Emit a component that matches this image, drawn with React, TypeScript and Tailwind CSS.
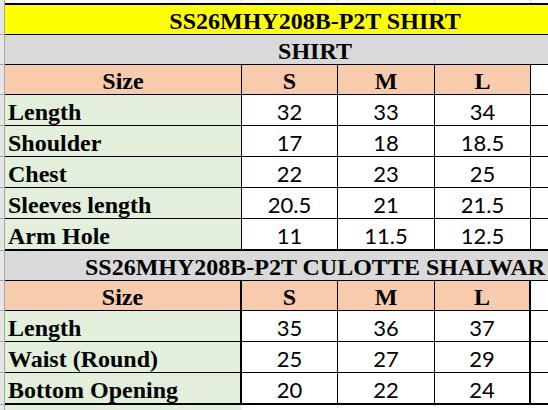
const serif = "font-['Liberation_Serif',serif] font-bold text-[24px] text-black";
const sans = "font-['Lato',sans-serif] text-[22px] text-black";
const cols = 'grid grid-cols-[5px_237px_96px_97px_96px_1fr]';

type Row = { label: string; values: string[] };

const shirt: Row[] = [
  { label: 'Length', values: ['32', '33', '34'] },
  { label: 'Shoulder', values: ['17', '18', '18.5'] },
  { label: 'Chest', values: ['22', '23', '25'] },
  { label: 'Sleeves length', values: ['20.5', '21', '21.5'] },
  { label: 'Arm Hole', values: ['11', '11.5', '12.5'] },
];

const culotte: Row[] = [
  { label: 'Length', values: ['35', '36', '37'] },
  { label: 'Waist (Round)', values: ['25', '27', '29'] },
  { label: 'Bottom Opening', values: ['20', '22', '24'] },
];

function Strip({ bottom = true }: { bottom?: boolean }) {
  return (
    <div
      className={`bg-[#e6e6e6] border-r border-[#a6a6a6] ${bottom ? 'border-b border-b-[#a6a6a6]' : ''}`}
    />
  );
}

function TitleRow({ text, bg, top = false, h }: { text: string; bg: string; top?: boolean; h: string }) {
  return (
    <div className={`${cols} ${h}`}>
      <Strip />
      <div
        className={`col-span-5 overflow-hidden border-b border-black ${bg} ${top ? 'border-t-2' : ''} flex items-center`}
      >
        <div className={`w-[620px] shrink-0 text-center leading-none pt-[2px] ${serif}`}>{text}</div>
      </div>
    </div>
  );
}

function HeaderRow({ thick = false }: { thick?: boolean }) {
  return (
    <div className={`${cols} h-[30px]`}>
      <Strip />
      <div
        className={`bg-[#f8cbad] border-b border-black ${thick ? 'border-r-2' : 'border-r'} border-r-black flex items-center justify-center leading-none pt-[3px] ${serif}`}
      >
        Size
      </div>
      {['S', 'M', 'L'].map((s, i) => (
        <div
          key={s}
          className={`bg-[#f8cbad] border-b border-black ${thick && i === 2 ? 'border-r-2' : 'border-r'} border-r-black flex items-center justify-center leading-none pt-[3px] ${serif}`}
        >
          {s}
        </div>
      ))}
      <div className="bg-white border-b border-black" />
    </div>
  );
}

function DataRow({ row, last = false, thick = false }: { row: Row; last?: boolean; thick?: boolean }) {
  const b = last ? 'border-b-2' : 'border-b';
  return (
    <div className={`${cols} ${last ? 'h-[32px]' : 'h-[31px]'}`}>
      <Strip />
      <div
        className={`bg-[#e2efda] ${b} border-black ${thick ? 'border-r-2' : 'border-r'} border-r-black flex items-center pl-[3px] leading-none pt-[3px] ${serif}`}
      >
        {row.label}
      </div>
      {row.values.map((v, i) => (
        <div
          key={i}
          className={`bg-white ${b} border-black ${thick && i === 2 ? 'border-r-2' : 'border-r'} border-r-black flex items-center justify-center leading-none pt-[3px] ${sans}`}
        >
          {v}
        </div>
      ))}
      <div className={`bg-white ${b} border-black`} />
    </div>
  );
}

export default function App() {
  return (
    <div className="w-[548px] h-[410px] overflow-hidden bg-white">
      <div className={`${cols} h-[3px]`}>
        <div className="bg-[#e6e6e6] border-r border-[#a6a6a6]" />
        <div className="border-r border-[#d4d4d4]" />
        <div className="border-r border-[#d4d4d4]" />
        <div className="border-r border-[#d4d4d4]" />
        <div className="border-r border-[#d4d4d4]" />
        <div />
      </div>

      <TitleRow text="SS26MHY208B-P2T SHIRT" bg="bg-[#ffff00]" top h="h-[32px]" />
      <TitleRow text="SHIRT" bg="bg-[#d9d9d9]" h="h-[30px]" />
      <HeaderRow />
      {shirt.map((r, i) => (
        <DataRow key={r.label} row={r} last={i === shirt.length - 1} />
      ))}

      <TitleRow text="SS26MHY208B-P2T CULOTTE SHALWAR" bg="bg-[#d9d9d9]" h="h-[30px]" />
      <HeaderRow thick />
      {culotte.map((r, i) => (
        <DataRow key={r.label} row={r} last={i === culotte.length - 1} thick />
      ))}

      <div className={`${cols} h-[10px]`}>
        <Strip bottom={false} />
        <div className="bg-[#e2efda]" />
        <div />
        <div />
        <div />
        <div />
      </div>
    </div>
  );
}
